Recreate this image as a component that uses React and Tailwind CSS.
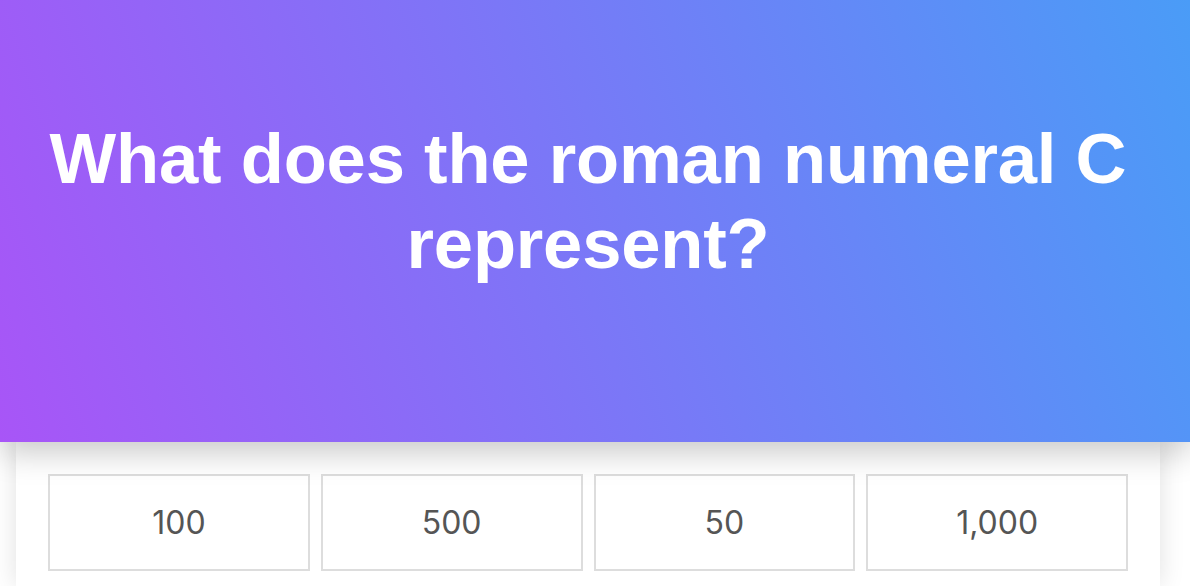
export default function App() {
  const answers = ["100", "500", "50", "1,000"];
  return (
    <div className="w-[1190px] h-[586px] overflow-hidden bg-white">
      <header className="relative z-10 h-[442px] w-full bg-[linear-gradient(72deg,#a855f7,#4a9cf7)] shadow-[0_10px_30px_rgba(0,0,0,0.22)]">
        <div className="w-[1176px] px-[20px] pt-[116px] text-center">
          <h1 className="font-['Liberation_Sans',Arial,sans-serif] text-[70.6px] leading-[85px] font-bold tracking-[-0.2px] text-white">
            What does the roman numeral C represent?
          </h1>
        </div>
      </header>
      <div className="ml-[16px] w-[1144px] h-[144px] bg-white px-[32px] pt-[32px] shadow-[0_0_24px_rgba(0,0,0,0.12)]">
        <div className="grid grid-cols-4 gap-[11px]">
          {answers.map((a) => (
            <button
              key={a}
              className="h-[97px] border-2 border-[#dddddd] bg-white font-['Inter',sans-serif] text-[32px] text-[#555555]"
            >
              {a}
            </button>
          ))}
        </div>
      </div>
    </div>
  );
}
